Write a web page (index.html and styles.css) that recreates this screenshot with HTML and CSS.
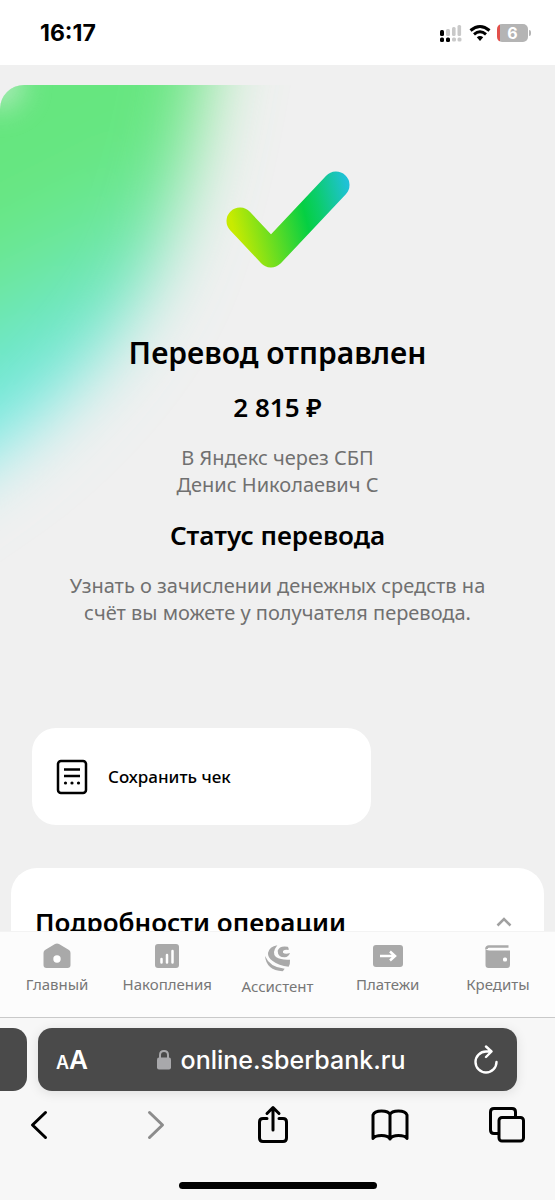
FILE: index.html
```html
<!DOCTYPE html>
<html lang="ru">
<head>
<meta charset="utf-8">
<meta name="viewport" content="width=device-width, initial-scale=1">
<title>Перевод отправлен</title>
<link rel="stylesheet" href="styles.css">
</head>
<body>
<header class="status-bar">
  <time class="clock">16:17</time>
  <div class="indicators">
    <svg width="24" height="20" viewBox="0 0 24 20">
      <g fill="#000"><rect x="1" y="7" width="4" height="6" rx="1.5"/><rect x="1" y="14.500" width="4" height="4.500" rx="1.500"/><rect x="7" y="14.500" width="4" height="4.500" rx="1.500"/></g>
      <g fill="#c9c9c9"><rect x="7" y="6" width="4" height="7" rx="1.500"/><rect x="13" y="4" width="3.600" height="9" rx="1.500"/><rect x="18.500" y="2" width="3.600" height="11" rx="1.500"/><rect x="13" y="14.500" width="4" height="4" rx="1.500"/><rect x="18.500" y="14.500" width="4" height="4" rx="1.500"/></g>
    </svg>
    <svg width="22" height="18" viewBox="0 0 22 18" fill="none" stroke="#000" stroke-width="3">
      <path d="M1.500 6.500Q11-1.500 20.500 6.500M5 10.300Q11 5.300 17 10.300"/><path d="M7.800 13.200Q11 10.800 14.200 13.200L11 17z" fill="#000" stroke="none"/>
    </svg>
    <div class="battery"><span class="battery-level">6</span></div>
  </div>
</header>

<main class="page">
  <section class="result">
    <svg class="glow" width="340" height="480" viewBox="0 0 340 480">
      <defs>
        <linearGradient id="glow-fill" gradientUnits="userSpaceOnUse" x1="0" y1="110" x2="112" y2="334">
          <stop offset="0" stop-color="#66e67f"/><stop offset=".3" stop-color="#6de79c"/><stop offset=".6" stop-color="#6ee6cc"/><stop offset=".8" stop-color="#76e9e4"/><stop offset="1" stop-color="#a4f0f4"/>
        </linearGradient>
        <filter id="soft" filterUnits="userSpaceOnUse" x="-300" y="-300" width="800" height="950"><feGaussianBlur stdDeviation="35"/></filter>
        <filter id="corner" filterUnits="userSpaceOnUse" x="-80" y="-80" width="180" height="200"><feGaussianBlur stdDeviation="14"/></filter>
      </defs>
      <path d="M-250-250H250L205 0Q190 95 155 185Q105 285 0 368L-250 540z" fill="url(#glow-fill)" filter="url(#soft)"/>
      <circle r="24" fill="#f0f0f0" opacity=".5" filter="url(#corner)"/>
    </svg>
    <svg class="check" width="126" height="100" viewBox="0 0 126 100">
      <defs><linearGradient id="check-fill" gradientUnits="userSpaceOnUse" x1="4" y1="42" x2="122" y2="12"><stop offset="0" stop-color="#c8eb00"/><stop offset=".6" stop-color="#05cf43"/><stop offset=".72" stop-color="#0bcd68"/><stop offset="1" stop-color="#20c1d8"/></linearGradient></defs>
      <path d="M15 51L46 84L111 15" fill="none" stroke="url(#check-fill)" stroke-width="27" stroke-linecap="round" stroke-linejoin="round"/>
    </svg>
    <h1 class="title">Перевод отправлен</h1>
    <p class="amount">2 815 ₽</p>
    <p class="note">В Яндекс через СБП<br>Денис Николаевич С</p>
    <h2 class="subtitle">Статус перевода</h2>
    <p class="note">Узнать о зачислении денежных средств на счёт вы можете у получателя перевода.</p>
  </section>

  <button class="save" type="button">
    <svg width="32" height="36" viewBox="0 0 32 36" fill="none" stroke="#000" stroke-width="2.500"><rect x="2" y="2" width="28" height="32" rx="3"/><path d="M8 10.500h16M8 17h16"/><g fill="#000" stroke="none"><circle cx="9.500" cy="24" r="1.600"/><circle cx="16" cy="24" r="1.600"/><circle cx="22.500" cy="24" r="1.600"/></g></svg>
    Сохранить чек
  </button>

  <section class="details">
    <button class="details-toggle" type="button" aria-expanded="true">
      Подробности операции
      <svg width="16" height="10" viewBox="0 0 16 10" fill="none" stroke="#a0a0a0" stroke-width="2.500"><path d="M1.500 8.500L8 2L14.500 8.500"/></svg>
    </button>
  </section>
</main>

<nav class="tabs">
  <a class="tab" href="#main">
    <svg width="30" height="28" viewBox="0 0 30 28"><path d="M15 1.500q1 0 2 .6L27 8q1.500 1 1.500 3v12q0 3-3 3h-21q-3 0-3-3V11q0-2 1.500-3l10-5.900q1-.6 2-.6z" fill="#a9a9a9"/><circle cx="15" cy="17" r="3.700" fill="#fff"/></svg>
    Главный
  </a>
  <a class="tab" href="#savings">
    <svg width="30" height="28" viewBox="0 0 30 28"><rect x="3" y="2" width="24" height="24" rx="3" fill="#a9a9a9"/><path d="M9.500 17v3.500M15 13v7.500M20.500 9v11.500" stroke="#fff" stroke-width="2.500" stroke-linecap="round"/></svg>
    Накопления
  </a>
  <a class="tab tab-center" href="#assistant">
    <svg width="30" height="28" viewBox="14 19 90 84" fill="#a9a9a9"><path d="M60 23Q36 27 32 46Q31 60 46 70Q64 84 94 87Q99 78 98 66Q72 68 56 58Q42 46 60 23z"/><path d="M91 27Q66 23 61 39Q61 58 82 59Q94 58 98 46Q84 51 77 45Q75 34 94 37Q95 30 91 27z"/><path d="M23 55Q27 98 76 101Q80 97 82 93Q38 90 23 55z"/></svg>
    Ассистент
  </a>
  <a class="tab" href="#payments">
    <svg width="30" height="28" viewBox="0 0 30 28"><rect x="0" y="3" width="30" height="22" rx="3" fill="#a9a9a9"/><path d="M7 14h15M17 9.500L22 14L17 18.500" fill="none" stroke="#fff" stroke-width="2.500"/></svg>
    Платежи
  </a>
  <a class="tab" href="#credits">
    <svg width="30" height="28" viewBox="0 0 30 28"><path d="M25.500 4.500H6q-2.500 0-2.500 2.500" fill="none" stroke="#a9a9a9" stroke-width="2.500"/><path d="M2.500 5q0 3.500 4 3.500H27V23q0 3-3 3H5.500q-3 0-3-3z" fill="#a9a9a9"/><rect x="20" y="15.500" width="4" height="4" rx="1.500" fill="#fff"/></svg>
    Кредиты
  </a>
</nav>

<footer class="browser">
  <div class="address-row">
    <div class="previous-page"></div>
    <div class="address-bar">
      <button class="reader" type="button" aria-label="Вид страницы"><span class="small-a">A</span>A</button>
      <button class="url" type="button">
        <svg width="16" height="21" viewBox="0 0 16 21"><path d="M4 9V6Q4 2 8 2T12 6V9" fill="none" stroke="#a8a8ab" stroke-width="2"/><rect x="1" y="8.500" width="14" height="12" rx="2" fill="#a8a8ab"/></svg>
        online.sberbank.ru
      </button>
      <button type="button" aria-label="Обновить">
        <svg width="26" height="30" viewBox="0 0 26 30" fill="none" stroke="#fff" stroke-width="2.400" stroke-linecap="round" stroke-linejoin="round"><path d="M23.500 17A10.500 10.500 0 1 1 13 6.500H18M13 1.500L18.500 6.500L13 12"/></svg>
      </button>
    </div>
  </div>
  <div class="toolbar">
    <button type="button" aria-label="Назад"><svg width="18" height="30" viewBox="0 0 18 30"><path d="M15.500 2.500L2.500 15L15.500 27.500"/></svg></button>
    <button type="button" aria-label="Вперёд" disabled><svg width="18" height="30" viewBox="0 0 18 30"><path d="M2.500 2.500L15.500 15L2.500 27.500"/></svg></button>
    <button type="button" aria-label="Поделиться"><svg width="30" height="40" viewBox="0 0 30 40"><path d="M9 13.500H5Q1.500 13.500 1.500 17V33Q1.500 36.500 5 36.500H25Q28.500 36.500 28.500 33V17Q28.500 13.500 25 13.500H21M15 25V2.500M9 8.500L15 2.500L21 8.500"/></svg></button>
    <button type="button" aria-label="Закладки"><svg width="38" height="32" viewBox="0 0 38 32"><path d="M19 5.500Q17.500 2 10.500 2T2 6V29.500Q4 26.500 10.500 26.500T19 30Q21 26.500 27.500 26.500T36 29.500V6Q34.500 2 27.500 2T19 5.500V30"/></svg></button>
    <button type="button" aria-label="Вкладки"><svg width="36" height="36" viewBox="0 0 36 36"><path d="M9.500 26.500H5Q1.500 26.500 1.500 23V5Q1.500 1.500 5 1.500H23Q26.500 1.500 26.500 5V10"/><rect x="10" y="10.500" width="24.500" height="23.500" rx="3"/></svg></button>
  </div>
  <div class="home-indicator"></div>
</footer>
</body>
</html>
```
FILE: styles.css
```css
* { box-sizing: border-box; }
body {
  margin: 0;
  height: 100vh;
  display: flex;
  flex-direction: column;
  background: #f0f0f0;
  color: #000;
  font-family: "Noto Sans", "Open Sans", sans-serif;
}
h1, h2, p { margin: 0; }
svg { display: block; flex: none; }
button {
  border: 0;
  padding: 0;
  background: none;
  color: inherit;
  font: inherit;
}
.status-bar {
  flex: none;
  height: 65px;
  padding: 0 27px 0 40px;
  display: flex;
  align-items: center;
  justify-content: space-between;
  background: #fff;
}
.clock { font: 700 23px/28px Inter, sans-serif; }
.indicators { display: flex; align-items: center; gap: 6px; }
.battery {
  position: relative;
  width: 31px;
  height: 18px;
  border-radius: 5px;
  background: linear-gradient(90deg, #e2504b 3px, #b4b4b4 3px);
  color: #fff;
  text-align: center;
  font: 700 16px/18px Inter, sans-serif;
}
.battery::after {
  content: "";
  position: absolute;
  right: -3px;
  top: 6px;
  width: 2px;
  height: 6px;
  border-radius: 0 2px 2px 0;
  background: #b4b4b4;
}
.page { flex: 1; min-height: 0; overflow: hidden; padding-top: 20px; }
.result {
  position: relative;
  overflow: hidden;
  border-radius: 24px 24px 0 0;
  padding: 85px 56px 102px;
  display: flex;
  flex-direction: column;
  align-items: center;
  text-align: center;
}
.result > * { position: relative; }
.result > .glow { position: absolute; left: 0; top: 0; }
.check { margin: 0 0 63px 20px; }
.title { font-size: 30px; line-height: 40px; font-weight: 600; }
.amount { margin: 18px 0 21px; font-size: 26px; line-height: 32px; font-weight: 600; }
.note { font-size: 20px; line-height: 27px; color: #707070; }
.subtitle { margin: 20px 0; font-size: 26px; line-height: 34px; font-weight: 600; }
.save {
  width: 61%;
  height: 97px;
  margin: 0 32px 43px;
  padding: 0 24px;
  display: flex;
  align-items: center;
  gap: 20px;
  border-radius: 24px;
  background: #fff;
  font-size: 17px;
  font-weight: 500;
}
.details { margin: 0 11px; border-radius: 26px 26px 0 0; background: #fff; }
.details-toggle {
  width: 100%;
  padding: 34px 32px 34px 24px;
  display: flex;
  align-items: center;
  justify-content: space-between;
  font-size: 26px;
  line-height: 40px;
  font-weight: 600;
}
.tabs {
  flex: none;
  height: 87px;
  padding: 10px 2px 0;
  display: grid;
  grid-template-columns: repeat(5, 1fr);
  align-items: start;
  border-top: 1px solid #f3f3f3;
  border-bottom: 1px solid #c9c9c9;
  background: #fcfcfc;
}
.tab {
  display: flex;
  flex-direction: column;
  align-items: center;
  gap: 4px;
  color: #777;
  font-size: 15px;
  line-height: 20px;
  text-decoration: none;
}
.tab-center { padding-top: 2px; }
.browser { flex: none; height: 182px; padding-top: 10px; background: #f7f7f7; }
.address-row { display: flex; gap: 11px; padding-right: 38px; }
.previous-page { width: 27px; border-radius: 0 14px 14px 0; background: #4a4a4a; }
.address-bar {
  flex: 1;
  height: 63px;
  padding: 0 18px;
  display: flex;
  align-items: center;
  justify-content: space-between;
  border-radius: 14px;
  background: #4a4a4a;
  box-shadow: 0 2px 12px #0000001a;
  color: #fff;
}
.reader { padding-top: 4px; font: 600 26px/32px Inter, sans-serif; }
.small-a { font-size: 18px; }
.url { display: flex; align-items: center; gap: 9px; font: 500 25px/32px Inter, sans-serif; }
.toolbar {
  height: 67px;
  padding: 0 29px 0 20px;
  display: flex;
  align-items: center;
  justify-content: space-between;
}
.toolbar button { width: 38px; display: flex; justify-content: center; }
.toolbar svg { fill: none; stroke: #000; stroke-width: 3; stroke-linecap: round; stroke-linejoin: round; }
.toolbar button:disabled svg { stroke: #8c8c8c; }
.home-indicator {
  width: 198px;
  height: 7px;
  margin: 24px auto 0;
  border-radius: 4px;
  background: #000;
}
```
